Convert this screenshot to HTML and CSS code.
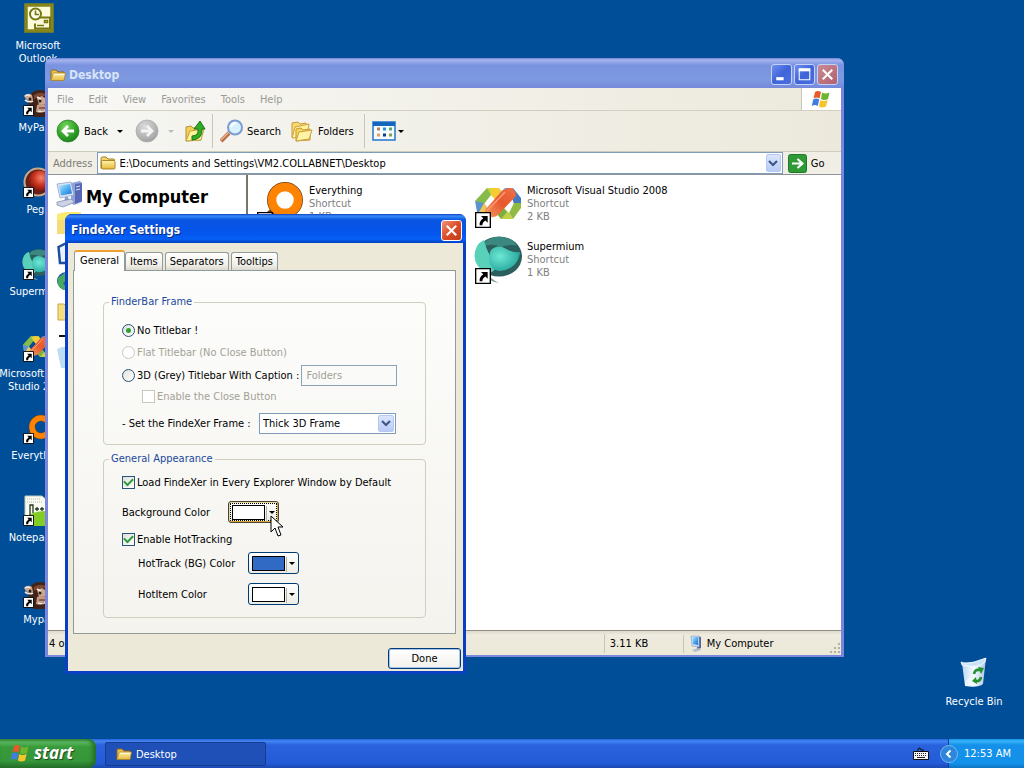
FILE: index.html
```html
<!DOCTYPE html>
<html lang="en">
<head>
<meta charset="utf-8">
<title>FindeXer Settings</title>
<link rel="stylesheet" href="styles.css">
</head>
<body>
<svg class="defs" aria-hidden="true">
  <defs>
    <linearGradient id="gFolder" x1="0" y1="0" x2="0" y2="1"><stop offset="0" stop-color="#fff3a8"/><stop offset="1" stop-color="#e8b93c"/></linearGradient>
    <radialGradient id="gGreen" cx=".4" cy=".3" r=".8"><stop offset="0" stop-color="#7bd860"/><stop offset=".5" stop-color="#38a830"/><stop offset="1" stop-color="#167a16"/></radialGradient>
    <radialGradient id="gGrey" cx=".4" cy=".3" r=".8"><stop offset="0" stop-color="#dcdcdc"/><stop offset="1" stop-color="#9a9a9a"/></radialGradient>
    <radialGradient id="gRed" cx=".6" cy=".35" r=".7"><stop offset="0" stop-color="#f4876a"/><stop offset=".5" stop-color="#c93420"/><stop offset="1" stop-color="#6b120c"/></radialGradient>
    <radialGradient id="gTeal" cx=".35" cy=".4" r=".7"><stop offset="0" stop-color="#6fe8d4"/><stop offset="1" stop-color="#22a39a"/></radialGradient>
    <linearGradient id="gBlue" x1="0" y1="0" x2="1" y2="1"><stop offset="0" stop-color="#bfeaff"/><stop offset=".5" stop-color="#4fb0f0"/><stop offset="1" stop-color="#1f6fd0"/></linearGradient>
    <linearGradient id="gOrange" x1="0" y1="1" x2="1" y2="0"><stop offset="0" stop-color="#f29a62"/><stop offset=".5" stop-color="#e8582c"/><stop offset="1" stop-color="#ee7048"/></linearGradient>
    <linearGradient id="gBin" x1="0" y1="0" x2="1" y2="0"><stop offset="0" stop-color="#b9d8f2"/><stop offset=".5" stop-color="#f4fbff"/><stop offset="1" stop-color="#a9c4e4"/></linearGradient>
    <symbol id="folder" viewBox="0 0 16 14"><path d="M1 12V3q0-1 1-1h4l2 2h6v8z" fill="#e9c04c" stroke="#8a6a1c"/><path d="M1 12.500l2-6.500q0-1 1-1h11.500l-1.500 7.500z" fill="url(#gFolder)" stroke="#a9822a" stroke-width=".7"/><path d="M4 6.500h10" stroke="#fffbe0"/></symbol>
    <symbol id="folderbox" viewBox="0 0 16 14"><path d="M1 12.500V2.500q0-1.500 1.500-1.500H6l2 2h5.500q1 0 1 1v1" fill="#f3d56e" stroke="#a07c22"/><rect x="1.500" y="4.500" width="13.500" height="8.500" rx="1" fill="url(#gFolder)" stroke="#a07c22" stroke-width=".9"/></symbol>
    <symbol id="short" viewBox="0 0 12 12"><path d="M.5.5h11v11H.5z" fill="#fff" stroke="#000"/><path d="M4.500 3h5v5L7.800 6.300Q5.500 7.500 5.500 10H3.500Q3 7 6.200 4.700z" fill="#000"/></symbol>
    <symbol id="flag" viewBox="0 0 20 18"><path d="M4 2q3-2 6 0L8.500 8.500q-3-2-6 0z" fill="#e8582a"/><path d="M11 2.500q3 2 7.500 0L17 9q-4 2-7 0z" fill="#6cb52d"/><path d="M2.200 9.500q3-2 6 0L6.800 16q-3-2-6 0z" fill="#3f7ee0"/><path d="M9.200 10q3 2 7.500 0L15 16.500q-4 2-7 0z" fill="#f4c52e"/></symbol>
    <symbol id="computer" viewBox="0 0 28 28"><path d="M16 3l9-2 2 2v19l-8 3-3-2z" fill="#8fa4dc"/><path d="M20 4v20l7-3V3z" fill="#5769b4"/><path d="M21 7l4-1M21 10l4-1" stroke="#dfe6fa"/><path d="M2 4l14-2 3 13-14 3z" fill="#dce4f4" stroke="#8498c4" stroke-width=".7"/><path d="M4 5.500l11-1.500 2 9.500-11 2z" fill="url(#gBlue)"/><path d="M10 17l3 0 2 5-6 1z" fill="#8da0cc"/><path d="M2 22l14-3 4 3-12 5-6-2z" fill="#ccd3e4" stroke="#7684ac" stroke-width=".7"/></symbol>
    <symbol id="zoneicon" viewBox="0 0 16 18"><path d="M9 1l4 1v11l-4 2z" fill="#56649a"/><path d="M3 1l8 0 0 11-7-1z" fill="#c8ddf2" stroke="#8a9cc4" stroke-width=".6"/><path d="M4 2l6 0 0 8-5-1z" fill="url(#gBlue)"/><path d="M4 15l7-2 2 2-6 2z" fill="#b4bccb"/></symbol>
    <symbol id="monkey" viewBox="0 0 32 32"><path d="M6 15Q6 4 16 2q13-1 15 11v10l-9 7H12z" fill="#41231a"/><path d="M12 7q8-5 14 1-6-1-14 3z" fill="#7d4732"/><path d="M2 8q4-4 8-1l1 5q-4 2-7-1zM15 10l5-2 6 4-3 4-6 1z" fill="#cfa58c"/><path d="M3 8q3-2 5 0M3 12q4 3 8 1M15 9l4 2" stroke="#efe7e0" stroke-width="1.600" fill="none"/><circle cx="8" cy="11" r="1.500" fill="#221"/><circle cx="18" cy="13" r="1.500" fill="#221"/><path d="M15 17q5-2 10 0v6q-6 3-11 1z" fill="#c79a80"/><path d="M17 20h7" stroke="#4b271c"/><path d="M16 23q5 1 8-1" stroke="#f2e8e0" stroke-width="1.500"/></symbol>
    <symbol id="everything" viewBox="0 0 32 32"><path d="M11 21L3 29" stroke="#744314" stroke-width="7"/><path d="M11 21L3 29" stroke="#ff8300" stroke-width="5"/><circle cx="19" cy="14" r="9" fill="none" stroke="#704318" stroke-width="6.500"/><circle cx="19" cy="14" r="9" fill="none" stroke="#ff8303" stroke-width="5.500"/></symbol>
    <symbol id="super" viewBox="0 0 48 48"><ellipse cx="25" cy="20.500" rx="23" ry="20" fill="#2a5f5d"/><path d="M5 12Q13 1 25 .7q12 0 18 9-9-2-17 2-5-6-21 0z" fill="#3a8880"/><path d="M.5 20Q1 8 10 4q3 14 13 26-5 9-10 6Q1 32 .5 20z" fill="#58d0ba"/><path d="M17 14q7-7 17 0 7 3 12 2-1 9-7 14-10 8-20 3-7-9-2-19z" fill="url(#gTeal)"/><path d="M13 37q5 7 12 10-11-2-16-8z" fill="#7f9f9c"/></symbol>
    <symbol id="vs" viewBox="0 0 48 36"><path d="M13 2h12l-2 6-8 1z" fill="#c9d640"/><path d="M17 2h8l7 9-7 7-8-9z" fill="#f6cc35"/><path d="M13 2l4 7-7 9-9-3z" fill="#86bb4c"/><path d="M1 15l9 2 2 4-4 7-5-2z" fill="#5c93cc"/><path d="M10 17l7 9-4 5-8-5z" fill="#e9c75c"/><path d="M25 8l6-6h8l-2 7-8 2z" fill="#6f9ed4"/><path d="M39 2l8 10v6h-7l-3-9z" fill="#4279bf"/><path d="M40 17h7v5l-8 11-4-6z" fill="#8fbb42"/><path d="M39 33H27l-6-8 6-6 8 8z" fill="#c5cf45"/><path d="M27 33l-6-8 6-6 6 7z" fill="#79b044"/><path d="M11 24L27 6q4-4 10-4 5 2 5 8L25 28q-4 4-10 3-4-2-4-7z" fill="url(#gOrange)"/><path d="M13 25L31 6" stroke="#ff9a78" stroke-width="1.500"/></symbol>
  </defs>
</svg>

<main class="desktop">
  <nav class="icons" aria-label="Desktop shortcuts">
    <a class="icon" href="#outlook"><svg viewBox="0 0 32 32"><path d="M4 2h26v26H4z" fill="#fbfbdc" stroke="#85851a" stroke-width="3.500"/><path d="M15 14.500h13v11H13v-5" fill="none" stroke="#77770f" stroke-width="2"/><circle cx="13.500" cy="11" r="5.500" fill="#fffff0" stroke="#77770f" stroke-width="2"/><path d="M13.500 7.500v4h3.500M15 22.500h7M22.500 17.500h3v2h-3z" fill="none" stroke="#77770f" stroke-width="1.600"/></svg><span>Microsoft Outlook</span></a>
    <a class="icon" href="#mypaint"><svg viewBox="0 0 32 32"><use href="#monkey" y="3"/><use href="#short" x="1" y="20" width="11" height="11"/></svg><span>MyPaint</span></a>
    <a class="icon" href="#pegs"><svg viewBox="0 0 32 32"><circle cx="16" cy="15" r="14.500" fill="#c8a88a"/><circle cx="16" cy="15" r="12.500" fill="#65221b"/><circle cx="17" cy="14" r="10.500" fill="url(#gRed)"/><use href="#short" x="1" y="20" width="11" height="11"/></svg><span>Pegs</span></a>
    <a class="icon" href="#supermium"><svg viewBox="0 0 32 32"><use href="#super" width="32" height="32"/><use href="#short" x="1" y="20" width="11" height="11"/></svg><span>Supermium</span></a>
    <a class="icon" href="#vs"><svg viewBox="0 0 32 32"><use href="#vs" y="4" width="32" height="24"/><use href="#short" x="1" y="20" width="11" height="11"/></svg><span class="wide">Microsoft Visual<br>Studio 2008</span></a>
    <a class="icon" href="#everything"><svg viewBox="0 0 32 32"><use href="#everything"/><use href="#short" x="1" y="20" width="11" height="11"/></svg><span>Everything</span></a>
    <a class="icon" href="#notepad"><svg viewBox="0 0 32 32"><path d="M3 1h17l7 6v22H3z" fill="#fafcf2" stroke="#c0c8bc"/><path d="M5 4h13M5 7h16" stroke="#aeb4ae" stroke-dasharray="1 1"/><path d="M3 23q8-8 24-7v15H3z" fill="#83cc26"/><path d="M8 20V10h3v8M13 14h4M15 12v4M18 14h4M20 12v4" stroke="#26361f" stroke-width="1.300" fill="none"/><use href="#short" x="1" y="20" width="11" height="11"/></svg><span>Notepad++</span></a>
    <a class="icon" href="#mypal"><svg viewBox="0 0 32 32"><use href="#monkey" y="3"/><use href="#short" x="1" y="20" width="11" height="11"/></svg><span>Mypal</span></a>
  </nav>

  <a class="icon bin" href="#bin"><svg viewBox="0 0 32 32"><path d="M4 6l15-1 9-4-3 26q-5 4-18 2z" fill="url(#gBin)"/><path d="M3 5q4 2 13 0L28 1l-1 4q-6 7-23 3z" fill="#c8e4fa" stroke="#fff" stroke-width=".8"/><path d="M7 24q8-7 10 0l-3 5-7 0z" fill="#fff" opacity=".6"/><g fill="none" stroke="#23912c" stroke-width="2.600"><path d="M16 17q1-5 6-4"/><path d="M23 20q-1 5-6 4"/></g><path d="M20 10l6 1-3 6zM19 27l-5-3 4-4z" fill="#23912c"/></svg><span>Recycle Bin</span></a>

  <section class="explorer" aria-label="Desktop">
    <header class="xtitle"><svg class="i16"><use href="#folder"/></svg><h1>Desktop</h1>
      <div class="caps"><button class="cap" aria-label="Minimize"><svg viewBox="0 0 18 18"><path d="M4 13h7" stroke="#fff" stroke-width="3"/></svg></button><button class="cap" aria-label="Maximize"><svg viewBox="0 0 18 18"><path d="M4 4.500h10v9.500H4z" fill="none" stroke="#fff"/><path d="M3.500 4.500h11" stroke="#fff" stroke-width="3"/></svg></button><button class="cap close" aria-label="Close"><svg viewBox="0 0 18 18"><path d="M4.500 4.500l9 9m0-9l-9 9" stroke="#fff" stroke-width="2"/></svg></button></div>
    </header>
    <div class="xbody">
      <div class="menu"><button>File</button><button>Edit</button><button>View</button><button>Favorites</button><button>Tools</button><button>Help</button><span class="brand"><svg width="20" height="18"><use href="#flag"/></svg></span></div>
      <div class="tools">
        <button class="tool back"><svg width="24" height="24" viewBox="0 0 24 24"><circle cx="12" cy="12" r="11" fill="url(#gGreen)" stroke="#288028" stroke-width=".7"/><path d="M18 12H8m4-5l-5 5 5 5" fill="none" stroke="#fff" stroke-width="2.800"/></svg>Back<i class="arrow"></i></button>
        <button class="tool fwd" aria-label="Forward"><svg width="24" height="24" viewBox="0 0 24 24"><circle cx="12" cy="12" r="11" fill="url(#gGrey)" stroke="#aaa" stroke-width=".7"/><path d="M6 12h10m-4-5l5 5-5 5" fill="none" stroke="#f4f4f4" stroke-width="2.800"/></svg><i class="arrow dim"></i></button>
        <button class="tool up" aria-label="Up"><svg width="22" height="24" viewBox="0 0 22 24"><path d="M2 22V8l5-1 2 2 8-1v13z" fill="#f0d055" stroke="#b4943b"/><path d="M2 22l4-10 14-2-3 11z" fill="#fff199" stroke="#c2a23e"/><path d="M8 17q7 0 6-7h-4l6-8 5 8h-3q1 10-10 11z" fill="#35aa25" stroke="#187816"/></svg></button>
        <span class="sep"></span>
        <button class="tool search"><svg width="24" height="24" viewBox="0 0 24 24"><path d="M1 22L9 14" stroke="#b96b48" stroke-width="4"/><path d="M1 21l8-8" stroke="#eeb38f" stroke-width="1.500"/><circle cx="15" cy="8.500" r="7" fill="#d8f1ff" stroke="#7a9cd2" stroke-width="2"/><path d="M11 8q1-4 5-4" fill="none" stroke="#fff" stroke-width="2"/></svg>Search</button>
        <button class="tool folders"><svg width="24" height="24" viewBox="0 0 24 24"><path d="M2 18V4l6-1 2 2 6-1v11z" fill="#f8da70" stroke="#c99a30"/><path d="M2 19L5 8l14-3-2 13z" fill="#fff0a0" stroke="#cca142"/><path d="M6 22V10l5-1 2 2 7-1v11z" fill="#f5d45f" stroke="#c99a30"/><path d="M6 22l3-9 13-2-3 9z" fill="#fff3a5" stroke="#cca142"/></svg>Folders</button>
        <span class="sep"></span>
        <button class="tool" aria-label="Views"><svg width="24" height="20" viewBox="0 0 24 20"><path d="M1 1h22v18H1z" fill="#f6fbff" stroke="#2676ca" stroke-width="1.500"/><path d="M1 1h22v4H1z" fill="#1665bd"/><path d="M5 8h3" stroke="#b58263" stroke-width="3"/><path d="M11 8h3" stroke="#2b91d4" stroke-width="3"/><path d="M17 8h3" stroke="#5ba76f" stroke-width="3"/><path d="M5 14h3" stroke="#ec9c55" stroke-width="3"/><path d="M11 14h3" stroke="#153a8e" stroke-width="3"/><path d="M17 14h3" stroke="#82a340" stroke-width="3"/></svg><i class="arrow"></i></button>
      </div>
      <div class="address"><label for="addr">Address</label>
        <div class="combo"><svg class="i16"><use href="#folderbox"/></svg><input id="addr" type="text" value="E:\Documents and Settings\VM2.COLLABNET\Desktop"><button class="drop" aria-label="Show history"><svg viewBox="0 0 10 8"><path d="M1 2l4 4 4-4" fill="none" stroke="#3f5687" stroke-width="2.200"/></svg></button></div>
        <button class="go"><svg width="19" height="19" viewBox="0 0 19 19"><rect x=".5" y=".5" width="18" height="18" rx="2" fill="#2f9a35" stroke="#1f7a28"/><path d="M4 9.500h9M9.500 5l5 4.500-5 4.500" fill="none" stroke="#fff" stroke-width="2"/></svg>Go</button></div>
      <div class="split">
        <aside class="side"><div class="sidehead"><svg width="28" height="28"><use href="#computer"/></svg><h2>My Computer</h2></div>
          <div class="bar">
            <svg viewBox="0 0 24 24"><path d="M0 2l8-2h16v22H0z" fill="#f9ea70"/><path d="M0 8h24v14H0z" fill="#f6dc78"/></svg>
            <svg viewBox="0 0 24 24"><path d="M1.500 5l6-3h14v19H3z" fill="#e8f2ff" stroke="#1d4f9e" stroke-width="2.500"/><path d="M9 7l3 10 3-10 3 10" fill="none" stroke="#173b89" stroke-width="2"/></svg>
            <svg viewBox="0 0 24 24"><circle cx="9" cy="9" r="9" fill="#1f62a8"/><path d="M1 6l7-5 3 6-5 4 4 6-4 1-5-5z" fill="#49a95e"/></svg>
            <svg viewBox="0 0 24 24"><path d="M1 2h6l2 2h12v14H1z" fill="#f4df80" stroke="#c6a644"/></svg>
            <svg class="slim" viewBox="0 0 24 8"><path d="M2 4h22" stroke="#111" stroke-width="2"/></svg>
            <svg viewBox="0 0 24 24"><path d="M0 3l5-2h17l-4 21H4z" fill="#bcdcf4"/></svg>
          </div></aside>
        <div class="files">
          <a class="file" href="#everything"><svg viewBox="0 0 48 48"><path d="M18 32L6 42" stroke="#744314" stroke-width="9"/><circle cx="29" cy="20" r="13" fill="#fff" stroke="#704318" stroke-width="10"/><circle cx="29" cy="20" r="13" fill="#fff" stroke="#ff8303" stroke-width="8.500"/><use href="#short" x="1" y="32" width="16" height="16"/></svg><span><b>Everything</b>Shortcut<br>1 KB</span></a>
          <a class="file" href="#vs"><svg viewBox="0 0 48 48"><use href="#vs" y="6" width="48" height="36"/><use href="#short" x="1" y="32" width="16" height="16"/></svg><span><b>Microsoft Visual Studio 2008</b>Shortcut<br>2 KB</span></a>
          <span class="file"></span>
          <a class="file" href="#supermium"><svg viewBox="0 0 48 48"><use href="#super" width="48" height="48"/><use href="#short" x="1" y="32" width="16" height="16"/></svg><span><b>Supermium</b>Shortcut<br>1 KB</span></a>
        </div>
      </div>
      <footer class="status"><span class="count">4 objects</span><span class="size">3.11 KB</span><span class="zone"><svg width="16" height="18"><use href="#zoneicon"/></svg>My Computer</span>
        <svg class="grip" viewBox="0 0 12 12"><path d="M9 1h2M9 5h2M9 9h2M5 5h2M5 9h2M1 9h2" stroke="#b5b09a" stroke-width="2"/></svg></footer>
    </div>
  </section>

  <form class="dialog" aria-label="FindeXer Settings">
    <header class="dtitle"><h2>FindeXer Settings</h2><button type="button" class="cap dclose" aria-label="Close"><svg viewBox="0 0 18 18"><path d="M4.500 4.500l9 9m0-9l-9 9" stroke="#fff" stroke-width="2"/></svg></button></header>
    <div class="dbody">
      <div class="tabs" role="tablist"><button type="button" role="tab" class="tab on" aria-selected="true">General</button><button type="button" role="tab" class="tab">Items</button><button type="button" role="tab" class="tab">Separators</button><button type="button" role="tab" class="tab">Tooltips</button></div>
      <div class="panel" role="tabpanel">
        <fieldset class="frame"><legend>FinderBar Frame</legend>
          <label class="row"><input type="radio" name="bar" checked>No Titlebar !</label>
          <label class="row off"><input type="radio" name="bar" disabled>Flat Titlebar (No Close Button)</label>
          <div class="row tall"><input type="radio" name="bar" id="b3"><label for="b3">3D (Grey) Titlebar With Caption :</label><input class="text" type="text" value="Folders" aria-label="Caption" disabled></div>
          <label class="row off short inset"><input type="checkbox" disabled>Enable the Close Button</label>
          <div class="row pick"><label for="frame">- Set the FindeXer Frame :</label><span class="selbox"><select id="frame"><option>Thick 3D Frame</option></select><span class="drop"><svg viewBox="0 0 10 8"><path d="M1 2l4 4 4-4" fill="none" stroke="#3f5687" stroke-width="2.200"/></svg></span></span></div>
        </fieldset>
        <fieldset class="look"><legend>General Appearance</legend>
          <label class="row"><input type="checkbox" checked>Load FindeXer in Every Explorer Window by Default</label>
          <div class="row bg"><label for="c1">Background Color</label><button type="button" id="c1" class="color focus"><i class="swatch"></i><i class="arrow"></i></button></div>
          <label class="row"><input type="checkbox" checked>Enable HotTracking</label>
          <div class="row hot"><label for="c2">HotTrack (BG) Color</label><button type="button" id="c2" class="color"><i class="swatch blue"></i><i class="arrow"></i></button></div>
          <div class="row hot last"><label for="c3">HotItem Color</label><button type="button" id="c3" class="color"><i class="swatch"></i><i class="arrow"></i></button></div>
        </fieldset>
      </div>
      <div class="actions"><button type="button" class="done">Done</button></div>
    </div>
  </form>

  <svg class="cursor" width="14" height="22" viewBox="0 0 14 22"><path d="M1 1v16l4-4 3 8 3-1-3-8h5z" fill="#fff" stroke="#000"/></svg>

  <footer class="taskbar">
    <button class="start"><svg width="20" height="18"><use href="#flag"/></svg>start</button>
    <button class="task"><svg class="i16"><use href="#folder"/></svg>Desktop</button>
    <button class="kbd" aria-label="Keyboard"><svg width="16" height="13" viewBox="0 0 16 13"><path d="M4 3h1l1-2h1l1 2h3" fill="none" stroke="#111"/><path d="M.5 4.500h15v8H.5z" fill="#f4f4f4" stroke="#111"/><path d="M2 6.500h12M2 8.500h12" stroke="#222" stroke-dasharray="1 1"/><path d="M4 10.500h8" stroke="#222"/></svg></button>
    <div class="tray"><button class="chev" aria-label="Show hidden icons"><svg width="18" height="18" viewBox="0 0 18 18"><circle cx="9" cy="9" r="8.500" fill="#2d86dc" stroke="#71b8f4"/><path d="M10.500 5.500L7 9l3.500 3.500" fill="none" stroke="#fff" stroke-width="2"/></svg></button><time>12:53 AM</time></div>
  </footer>
</main>
</body>
</html>
```
FILE: styles.css
```css
* { box-sizing: border-box; }
body { margin: 0; font: 11px/13px "DejaVu Sans Condensed", "DejaVu Sans", sans-serif; color: #000; }
button, input, select { font: inherit; color: inherit; margin: 0; padding: 0; border: 0; background: none; }
h1, h2 { margin: 0; }
a { color: inherit; text-decoration: none; }
.defs { position: absolute; width: 0; height: 0; }
.i16 { width: 16px; height: 14px; flex: none; }

.desktop { position: relative; display: flex; flex-direction: column; min-height: 100vh; background: #004e98; overflow: hidden; }
.icons { display: grid; grid-template-columns: 76px; grid-auto-rows: 82px; padding-top: 3px; flex: 1; align-content: start; }
.icon { display: flex; flex-direction: column; align-items: center; gap: 4px; color: #fff; text-align: center; }
.icon svg { width: 32px; height: 32px; flex: none; }
.wide { white-space: nowrap; }
.bin { position: absolute; right: 12px; bottom: 60px; width: 76px; gap: 6px; }

.explorer { position: absolute; left: 45px; top: 58px; width: 78%; height: 78%; display: flex; flex-direction: column; padding: 0 3px 2px; border-radius: 7px 7px 0 0; background: #7b87dc; }
.xtitle { display: flex; align-items: center; flex: none; height: 30px; gap: 3px; margin: 0 -3px; padding: 3px 6px 0 5px; border-radius: 7px 7px 0 0; background: linear-gradient(#7082d4, #a5b4ee 2px, #7b93df 7px, #7d9ae0 22px, #7688db); color: #d8e4f8; }
.xtitle h1 { flex: 1; font-size: 12px; line-height: 16px; }
.caps { display: flex; gap: 2px; }
.cap { width: 21px; height: 21px; border: 1px solid #c5d2f8; border-radius: 3px; background: linear-gradient(135deg, #6f8ff0, #3f64d8 50%, #4a70e2); }
.cap svg { display: block; width: 19px; height: 19px; }
.close { background: linear-gradient(135deg, #c98a94, #b2606c); }
.xbody { display: flex; flex-direction: column; flex: 1; min-height: 0; background: #efede2; }
.menu { display: flex; flex: none; height: 23px; padding-left: 9px; gap: 15px; color: #9a9a96; background: linear-gradient(90deg, #f8f8f6, #ece9dc); border-bottom: 1px solid #d2cfc2; }
.brand { display: flex; align-items: center; justify-content: center; width: 40px; margin-left: auto; background: #fff; border-left: 1px solid #c8c5b8; }
.tools { display: flex; align-items: center; flex: none; height: 41px; padding: 0 8px; background: linear-gradient(90deg, #f6f6f3, #ece9dc); border-bottom: 1px solid #cfccbe; }
.tool { display: flex; align-items: center; gap: 4px; }
.arrow { display: block; border: solid transparent; border-width: 3px 3px 0; border-top-color: #000; }
.back .arrow { margin-left: 5px; }
.fwd { margin-left: 12px; gap: 9px; }
.dim { border-top-color: #bbb; }
.up { margin-left: 10px; }
.sep { width: 1px; height: 34px; margin: 0 7px 0 6px; background: #cac7ba; }
.search { gap: 3px; }
.folders { margin-left: 9px; }
.sep + .tool:last-child { gap: 2px; }
.sep:nth-last-child(2) { margin-left: 10px; }
.address { display: flex; align-items: center; flex: none; height: 22px; padding: 0 3px 0 5px; gap: 5px; color: #7d7b74; background: #f0eee5; }
.combo { display: flex; align-items: center; flex: 1; height: 22px; gap: 3px; padding: 1px 1px 1px 2px; border: 1px solid #7f9db9; background: #fff; color: #000; }
.combo input { flex: 1; min-width: 0; }
.drop { display: flex; align-items: center; justify-content: center; width: 15px; height: 18px; border: 1px solid #b5c8f5; border-radius: 2px; background: linear-gradient(#dbe6fd, #b9cbf7); }
.drop svg { width: 10px; height: 8px; }
.go { display: flex; align-items: center; gap: 4px; width: 50px; color: #000; }
.split { display: flex; flex: 1; min-height: 0; background: #fff; border-top: 1px solid #8e9299; border-bottom: 1px solid #8e8d86; }
.side { width: 200px; flex: none; border-right: 2px solid #77756c; overflow: hidden; }
.sidehead { display: flex; align-items: center; gap: 3px; padding: 4px 0 3px 7px; }
.sidehead h2 { padding-top: 6px; font-size: 18px; line-height: 24px; }
.bar { display: grid; justify-items: start; gap: 6px; padding-left: 9px; }
.bar svg { width: 24px; height: 24px; }
.bar .slim { height: 8px; }
.files { flex: 1; display: grid; grid-template-columns: 218px 218px; grid-auto-rows: 56px; padding: 5px 0 0 8px; min-width: 0; }
.file { display: flex; gap: 5px; color: #808080; white-space: nowrap; }
.file svg { width: 48px; height: 48px; flex: none; }
.file span { padding-top: 4px; }
.file b { display: block; font-weight: normal; color: #000; }
.status { display: flex; align-items: center; flex: none; height: 24px; padding: 1px 0 0 1px; background: linear-gradient(#dedbcd, #eeebdf 4px, #ece9d8); }
.count { flex: 1; }
.size { width: 79px; padding: 3px 5px; border-left: 1px solid #c8c5b4; }
.zone { display: flex; align-items: center; gap: 3px; width: 146px; padding-left: 4px; border-left: 1px solid #c8c5b4; }
.grip { width: 12px; height: 12px; align-self: flex-end; }

.dialog { position: absolute; left: 65px; top: 214px; width: 401px; padding: 0 3px 3px; border-radius: 7px 7px 0 0; background: #0a3fc4; }
.dtitle { display: flex; align-items: center; justify-content: space-between; height: 29px; margin: 0 -3px; padding: 3px 4px 0 6px; border-radius: 7px 7px 0 0; background: linear-gradient(#0a3fc0, #3a8af8 2px, #0a54e0 6px, #0456ee 20px, #0560f6 25px, #0340c0); color: #fff; }
.dtitle h2 { font-size: 12px; line-height: 16px; text-shadow: 1px 1px #0a2c80; }
.dclose { border-color: #fff; background: linear-gradient(135deg, #ee9479, #dc4c28 50%, #c43c1c); }
.dbody { padding: 7px 2px 2px 5px; background: #ece9d8; }
.tabs { display: flex; align-items: flex-end; height: 20px; padding-left: 1px; }
.tab { height: 18px; padding: 0 4px; border: 1px solid #919b9c; border-bottom: 0; border-radius: 3px 3px 0 0; background: linear-gradient(#fff, #f0efe8 70%, #dcd9ce); }
.tab + .tab + .tab { margin-left: 2px; }
.on { position: relative; height: 21px; margin-bottom: -1px; padding: 0 5px 3px; border-top: 2px solid #f0a030; background: #fdfdfc; }
.panel { margin-right: 5px; padding: 24px 29px 15px; border: 1px solid #919b9c; background: linear-gradient(#fdfdfc, #f4f3ee); }
fieldset { margin: 0; min-width: 0; border: 1px solid #cfcfbe; border-radius: 4px; }
legend { padding: 0 2px; margin-left: -13px; line-height: 14px; color: #1c489c; }
.frame { padding: 10px 18px; }
.look { margin-top: 7px; padding: 5px 18px 12px; }
.row { display: flex; align-items: center; height: 22px; gap: 2px; white-space: nowrap; }
.off { color: #a3a196; }
.tall { height: 24px; }
.short { height: 18px; }
.inset { padding-left: 20px; }
.pick { margin-top: 7px; }
[type=radio], [type=checkbox] { appearance: none; display: grid; place-items: center; flex: none; width: 13px; height: 13px; border: 1px solid #26547c; background: linear-gradient(135deg, #e0e0da, #fff); }
[type=radio] { border-radius: 50%; }
[type=radio]:checked::after { content: ""; width: 5px; height: 5px; border-radius: 50%; background: #2fa32f; }
[type=checkbox]:checked::after { content: ""; width: 7px; height: 4px; margin-top: -2px; border: solid #2c9a38; border-width: 0 0 2px 2px; transform: rotate(-45deg); }
input:disabled { border-color: #cac8bb; background: #fff; }
.text { width: 96px; height: 21px; margin-left: auto; margin-right: 10px; padding: 0 4px; border: 1px solid #7f9db9; color: #a3a196; }
.text:disabled { border-color: #8ea3b5; background: #fafaf8; }
.selbox { display: flex; align-items: center; flex: none; width: 137px; height: 21px; margin-left: auto; margin-right: 11px; padding-right: 1px; border: 1px solid #7f9db9; background: #fff; }
select { appearance: none; flex: 1; min-width: 0; padding-left: 3px; }
.selbox .drop { width: 16px; height: 17px; }
.bg { margin: 8px 0 5px; }
.bg label { width: 104px; }
.hot { margin-top: 2px; padding-left: 16px; }
.hot label { width: 108px; }
.last { margin-top: 9px; }
.color { display: flex; align-items: center; justify-content: space-between; width: 51px; height: 22px; padding: 0 3px; border: 1px solid #003c74; border-radius: 3px; background: linear-gradient(#fff, #ecebe4); }
.swatch { width: 33px; height: 15px; border: 1px solid #000; background: #fff; }
.blue { background: #316ac5; }
.color .arrow { position: relative; }
.color .arrow::before { content: ""; position: absolute; left: -6px; top: -8px; width: 1px; height: 15px; background: #b5b3a8; }
.focus { border-color: #49452f; box-shadow: inset -1px -1px #dba63c, inset 1px 1px #e8d8a0; outline: 1px dotted #000; outline-offset: -3px; }
.actions { display: flex; justify-content: flex-end; padding-top: 14px; }
.done { width: 73px; height: 21px; border: 1px solid #003c74; border-radius: 3px; background: linear-gradient(#fff, #f2f1ec); box-shadow: inset 0 0 0 1px #a9c3f0; }
.cursor { position: absolute; left: 270px; top: 515px; }

.taskbar { position: relative; display: flex; align-items: stretch; height: 29px; background: linear-gradient(#245edb, #4287f4 2px, #2a62dc 6px, #245bd8 24px, #1c48b0); color: #fff; }
.start { display: flex; align-items: center; gap: 4px; width: 96px; padding: 0 0 2px 10px; border-radius: 0 8px 8px 0; background: linear-gradient(#3f9142, #5cb860 3px, #389a3a 8px, #36963a 22px, #24702a); box-shadow: inset -3px 0 4px #236b28; font: italic bold 17px/20px "Open Sans", sans-serif; text-shadow: 1px 1px 1px #1d4a1d; }
.task { display: flex; align-items: center; gap: 4px; width: 161px; margin: 3px 0 2px 9px; padding-left: 10px; border: 1px solid #183c94; border-radius: 2px; background: #1e50b8; }
.kbd { display: flex; align-items: center; margin-left: auto; margin-right: 19px; }
.tray { display: flex; align-items: center; background: linear-gradient(#1290e8, #38b4f8 2px, #1590ea 6px, #1292ea 24px, #0f74c4); border-left: 1px solid #0f3f98; padding-right: 13px; gap: 6px; }
.chev { display: flex; margin-left: -9px; }
```
